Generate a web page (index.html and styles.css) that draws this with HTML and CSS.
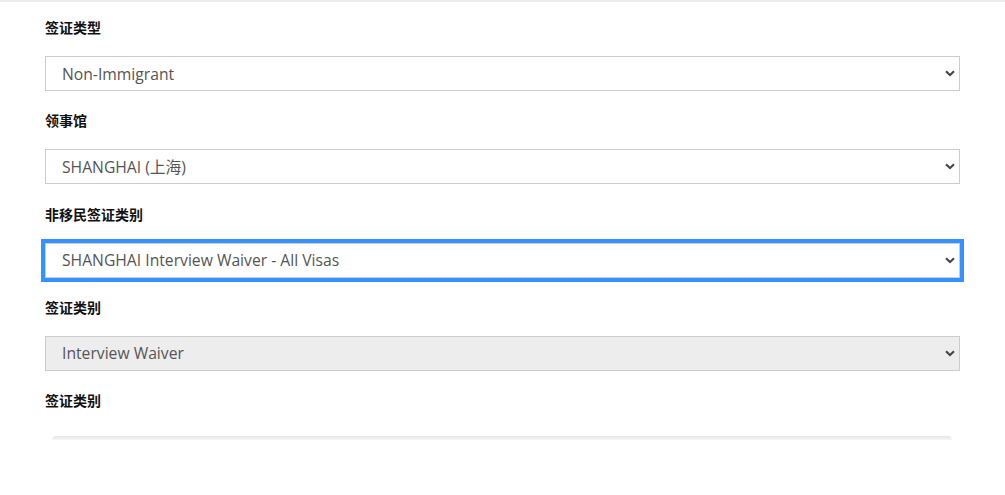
FILE: index.html
```html
<!DOCTYPE html>
<html lang="zh-CN">
<head>
<meta charset="utf-8">
<link rel="stylesheet" href="styles.css">
</head>
<body>
<div class="page">
  <div class="form-group">
    <label class="label">签证类型</label>
    <select class="field"><option>Non-Immigrant</option></select>
  </div>
  <div class="form-group">
    <label class="label">领事馆</label>
    <select class="field"><option>SHANGHAI (上海)</option></select>
  </div>
  <div class="form-group">
    <label class="label">非移民签证类别</label>
    <select class="field focused"><option>SHANGHAI Interview Waiver - All Visas</option></select>
  </div>
  <div class="form-group">
    <label class="label">签证类别</label>
    <select class="field disabled" disabled><option>Interview Waiver</option></select>
  </div>
  <div class="form-group">
    <label class="label">签证类别</label>
    <div class="card-edge"></div>
  </div>
</div>
</body>
</html>
```
FILE: styles.css
```css
html, body {
  margin: 0;
  padding: 0;
  background: #fff;
}
.page {
  border-top: 2px solid #ececec;
  padding: 15px 45px 0 45px;
  width: 915px;
  font-family: "Open Sans", "Noto Sans CJK SC", sans-serif;
}
.form-group {
  margin-bottom: 19.3px;
}
.label {
  display: block;
  font-family: "Noto Sans CJK SC", sans-serif;
  font-weight: bold;
  font-size: 14px;
  line-height: 20px;
  color: #111;
  margin-bottom: 19px;
}
.field {
  display: block;
  width: 915px;
  height: 35px;
  box-sizing: border-box;
  margin: 0;
  padding: 0 30px 0 16px;
  border: 1px solid #cccccc;
  border-radius: 0;
  background-color: #fff;
  color: #555;
  font-family: "Open Sans", "Noto Sans CJK SC", sans-serif;
  font-size: 15.7px;
  -webkit-appearance: none;
  appearance: none;
  background-image: url("data:image/svg+xml;utf8,<svg xmlns='http://www.w3.org/2000/svg' width='10' height='7' viewBox='0 0 10 7'><path d='M1 1.2 L5 5 L9 1.2' fill='none' stroke='%23444' stroke-width='2'/></svg>");
  background-repeat: no-repeat;
  background-position: right 4px center;
  outline: none;
}
.focused {
  outline: 4px solid #3392ff;
  outline-offset: 0;
}
.disabled {
  background-color: #ededed;
  opacity: 1;
  color: #555;
}
.card-edge {
  margin: 26px 8px 0 7px;
  height: 4px;
  border-radius: 8px 8px 0 0;
  background: linear-gradient(#e4e4e4, #f6f6f6);
}
```
